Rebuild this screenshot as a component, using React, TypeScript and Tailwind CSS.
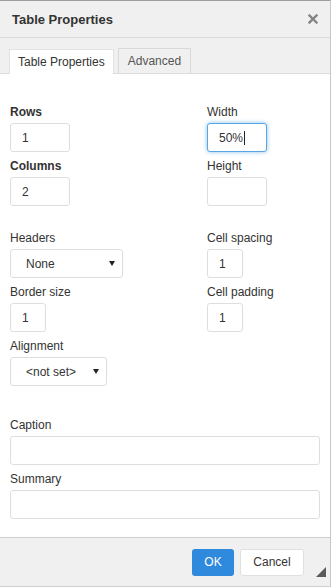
const Field = ({
  label,
  value,
  width,
  bold,
  focused,
}: {
  label: string;
  value?: string;
  width: string;
  bold?: boolean;
  focused?: boolean;
}) => (
  <div className="flex flex-col gap-[3px]">
    <div className={`h-[16px] leading-[16px] text-[12px] text-[#333] ${bold ? "font-bold" : ""}`}>{label}</div>
    <div
      className={`${width} h-[29px] rounded-[3px] bg-white border flex items-center pl-[11px] text-[12px] text-[#333] ${
        focused ? "border-[#59a5e5] shadow-[0_0_4px_rgba(89,165,229,0.7)]" : "border-[#dedede]"
      }`}
    >
      {value}
      {focused && <span className="ml-[1px] w-px h-[14px] bg-[#222]"></span>}
    </div>
  </div>
);

const Select = ({ label, value, width }: { label: string; value: string; width: string }) => (
  <div className="flex flex-col gap-[3px]">
    <div className="h-[16px] leading-[16px] text-[12px] text-[#333]">{label}</div>
    <div
      className={`${width} h-[29px] rounded-[3px] bg-white border border-[#dedede] flex items-center justify-between pl-[15px] pr-[7px] text-[12px] text-[#333]`}
    >
      <span>{value}</span>
      <svg width="6" height="5" viewBox="0 0 6 5">
        <polygon points="0,0 6,0 3,5" fill="#222" />
      </svg>
    </div>
  </div>
);

const App = () => {
  return (
    <div className="w-[331px] h-[587px] flex flex-col bg-white border-t border-r border-b border-t-[#9e9e9e] border-r-[#c8c8c8] border-b-[#d0d0d0] font-['Liberation_Sans',Arial,sans-serif] relative">
      {/* Header */}
      <div className="h-[37px] shrink-0 bg-[#f0f0f0] border-b border-[#dcdcdc] flex items-center justify-between pl-[12px] pr-[12px]">
        <div className="text-[13px] font-bold text-[#333] pt-px">Table Properties</div>
        <svg width="10" height="10" viewBox="0 0 10 10">
          <path d="M1.5 1.5 L8.5 8.5 M8.5 1.5 L1.5 8.5" stroke="#858585" strokeWidth="2.4" strokeLinecap="square" />
        </svg>
      </div>

      {/* Tabs */}
      <div className="h-[36px] shrink-0 bg-[#f0f0f0] border-b border-[#dcdcdc] flex items-end gap-[4px] pl-[9px]">
        <div className="h-[25px] -mb-px bg-white border border-b-0 border-[#e2e2e2] px-[8px] flex items-center text-[12px] text-[#333]">
          Table Properties
        </div>
        <div className="h-[25px] bg-[#f0f0f0] border border-b-0 border-[#d9d9d9] px-[9px] flex items-center text-[12px] text-[#555]">
          Advanced
        </div>
      </div>

      {/* Body */}
      <div className="flex-1 flex flex-col px-[10px] pt-[30px]">
        <div className="flex">
          <div className="w-[197px] flex flex-col gap-[6px]">
            <Field label="Rows" value="1" width="w-[60px]" bold />
            <Field label="Columns" value="2" width="w-[60px]" bold />
          </div>
          <div className="flex flex-col gap-[6px]">
            <Field label="Width" value="50%" width="w-[60px]" focused />
            <Field label="Height" width="w-[60px]" />
          </div>
        </div>

        <div className="flex mt-[24px]">
          <div className="w-[197px] flex flex-col gap-[6px]">
            <Select label="Headers" value="None" width="w-[113px]" />
            <Field label="Border size" value="1" width="w-[36px]" />
            <Select label="Alignment" value="<not set>" width="w-[97px]" />
          </div>
          <div className="flex flex-col gap-[6px]">
            <Field label="Cell spacing" value="1" width="w-[36px]" />
            <Field label="Cell padding" value="1" width="w-[36px]" />
          </div>
        </div>

        <div className="flex flex-col gap-[6px] mt-[31px]">
          <Field label="Caption" width="w-full" />
          <Field label="Summary" width="w-full" />
        </div>
      </div>

      {/* Footer */}
      <div className="h-[49px] shrink-0 bg-[#f0f0f0] border-t border-[#cfcfcf] flex items-center justify-end gap-[6px] pr-[26px]">
        <div className="h-[27px] w-[42px] rounded-[3px] bg-[#2f89dc] flex items-center justify-center text-[12px] text-white">
          OK
        </div>
        <div className="h-[27px] w-[64px] rounded-[3px] bg-white border border-[#e0e0e0] flex items-center justify-center text-[12px] text-[#333]">
          Cancel
        </div>
      </div>
      <svg className="absolute right-[4px] bottom-[9px]" width="10" height="10" viewBox="0 0 10 10">
        <polygon points="10,0 10,10 0,10" fill="#5a5a5a" />
      </svg>
    </div>
  );
};

export default App;
